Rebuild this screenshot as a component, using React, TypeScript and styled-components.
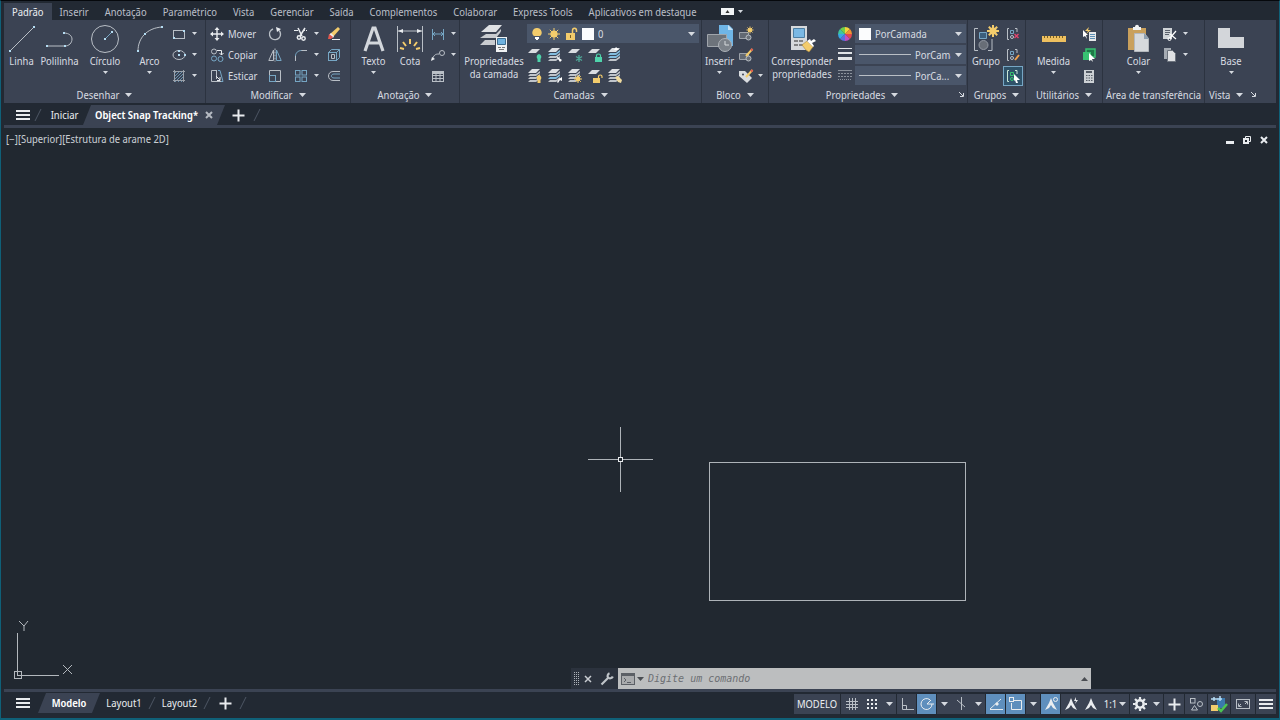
import React from "react";
import styled, { createGlobalStyle } from "styled-components";

const c = {
  frame: "#0f6078",
  dark: "#222933",
  ribbon: "#3b4353",
  line: "#2c3340",
  canvas: "#212830",
  field: "#4a566a",
  active: "#5f8fbd",
  text: "#d6dae0",
  bright: "#e9ecef",
  icon: "#b9bfc6",
  blue: "#76a6c4",
  yellow: "#f3cc6c",
  green: "#38c172",
};

const GlobalStyle = createGlobalStyle`
  * { box-sizing: border-box; }
  body { margin: 0; background: ${c.dark}; }
  body, button, select, input {
    font-family: "Noto Sans Display", "Noto Sans", "Open Sans", sans-serif;
    font-size: 10px;
    line-height: 14px;
    color: ${c.text};
  }
  button { border: 0; padding: 0; margin: 0; background: none; cursor: pointer; }
  svg { display: block; flex: none; }
`;

/* ---------- frame ---------- */

const Window = styled.div`
  display: flex;
  flex-direction: column;
  height: 100vh;
  padding: 2px 3px 0;
  border: solid ${c.frame};
  border-width: 0 1px 2px;
  border-top: 1px solid #05080c;
  background: ${c.dark};
  overflow: hidden;
`;

const MenuBar = styled.nav`
  display: flex;
  flex: none;
  height: 17px;
`;

const MenuTab = styled.button<{ $active?: boolean }>`
  height: 17px;
  padding: 0 8px;
  white-space: nowrap;
  color: ${(p) => (p.$active ? c.bright : "#b9bec7")};
  background: ${(p) => (p.$active ? c.ribbon : "transparent")};
`;

const MenuExtra = styled.button`
  display: flex;
  align-items: center;
  gap: 4px;
  margin-left: 16px;
`;

/* ---------- ribbon ---------- */

const Ribbon = styled.div`
  display: flex;
  flex: none;
  background: ${c.ribbon};
  white-space: nowrap;
`;

const PanelBox = styled.section<{ $w?: number }>`
  display: flex;
  flex-direction: column;
  ${(p) => (p.$w ? `flex: none; width: ${p.$w}px;` : "flex: 1;")}
  border-right: 1px solid ${(p) => (p.$w ? c.line : "transparent")};
`;

const PanelBody = styled.div<{ $pad?: number }>`
  display: flex;
  height: 66px;
  padding: 3px 0 0 ${(p) => p.$pad ?? 0}px;
`;

const PanelTitle = styled.button<{ $left?: boolean }>`
  display: flex;
  align-items: center;
  justify-content: ${(p) => (p.$left ? "flex-start" : "center")};
  gap: 6px;
  height: 17px;
  padding: 0 4px;
`;

const TitleRow = styled.div<{ $left?: boolean }>`
  display: grid;
  grid-template-columns: ${(p) => (p.$left ? "auto 12px 1fr" : "1fr 12px")};
  align-items: center;
  height: 17px;
`;

const BigButton = styled.button<{ $w: number }>`
  display: flex;
  flex: none;
  flex-direction: column;
  align-items: center;
  width: ${(p) => p.$w}px;
  height: 62px;
`;

const BigIcon = styled.span`
  display: flex;
  align-items: center;
  justify-content: center;
  height: 32px;
`;

const BigLabel = styled.span`
  line-height: 13px;
  white-space: pre;
`;

const CaretBox = styled.span`
  display: flex;
  justify-content: center;
  padding-top: 3px;
`;

const Column = styled.div<{ $w?: number }>`
  display: flex;
  flex: none;
  flex-direction: column;
  ${(p) => (p.$w ? `width: ${p.$w}px;` : "")}
`;

const Row = styled.div<{ $gap?: number }>`
  display: flex;
  align-items: center;
  gap: ${(p) => p.$gap ?? 0}px;
  height: 21px;
`;

const Tool = styled.button<{ $w?: number; $h?: number; $on?: boolean }>`
  display: flex;
  flex: none;
  align-items: center;
  justify-content: center;
  width: ${(p) => p.$w ?? 20}px;
  height: ${(p) => p.$h ?? 20}px;
  ${(p) => (p.$on ? `border: 1px solid ${c.blue}; background: #2f5269;` : "")}
`;

const TextTool = styled.button`
  display: flex;
  align-items: center;
  gap: 3px;
  height: 20px;
`;

const Field = styled.label`
  display: flex;
  flex: 1;
  align-items: center;
  gap: 4px;
  min-width: 0;
  height: 19px;
  padding: 0 4px;
  background: ${c.field};
`;

const Select = styled.select`
  flex: 1;
  min-width: 0;
  height: 16px;
  padding: 0;
  border: 0;
  appearance: none;
  background: transparent;
  outline: none;
`;

const Swatch = styled.span`
  flex: none;
  width: 12px;
  height: 12px;
  background: #fbfcfd;
`;

const LayerArea = styled.div`
  width: 172px;
`;

const FieldStack = styled.div`
  width: 111px;
`;

/* ---------- tab strips ---------- */

const Strip = styled.div`
  display: flex;
  flex: none;
  align-items: center;
  height: 22px;
  padding-left: 12px;
`;

const FileStrip = styled(Strip)`
  align-items: stretch;
  padding-top: 2px;
  & > svg { align-self: center; }
`;

const LayoutStrip = styled(Strip)`
  align-self: flex-start;
`;

const Bar = styled.div`
  flex: none;
  height: 3px;
  background: ${c.ribbon};
`;

const StripButton = styled.button<{ $w: number }>`
  display: flex;
  flex: none;
  align-items: center;
  justify-content: center;
  width: ${(p) => p.$w}px;
  color: ${c.bright};
`;

const Slanted = styled.div<{ $w: number }>`
  display: flex;
  flex: none;
  align-items: center;
  justify-content: center;
  gap: 7px;
  width: ${(p) => p.$w}px;
  height: 20px;
  background: ${c.ribbon};
  clip-path: polygon(8px 0, 100% 0, calc(100% - 8px) 100%, 0 100%);
`;

const SlantedTab = styled.button`
  color: #fff;
  font-weight: 600;
`;

/* ---------- canvas ---------- */

const Canvas = styled.main`
  position: relative;
  flex: 1;
  min-height: 0;
  background: ${c.canvas};
  margin: 0 -3px;
`;

const Drawing = styled.svg`
  position: absolute;
  inset: 0;
  width: 100%;
  height: 100%;
`;

const CanvasHeader = styled.div`
  position: relative;
  display: flex;
  align-items: flex-start;
  justify-content: space-between;
  padding: 4px 9px 0 5px;
`;

const ViewLabel = styled.button`
  color: #c9ced4;
`;

const WindowButtons = styled.div`
  display: flex;
  align-items: center;
  gap: 5px;
`;

const Ucs = styled.svg`
  position: absolute;
  left: 13px;
  bottom: 9px;
`;

const CommandBar = styled.div`
  position: absolute;
  left: 570px;
  right: 188px;
  bottom: 0;
  display: flex;
  align-items: center;
  height: 21px;
  background: #2b323d;
`;

const CommandField = styled.label`
  display: flex;
  flex: 1;
  align-items: center;
  gap: 2px;
  height: 21px;
  padding: 0 3px;
  background: #bcbebf;
`;

const CommandInput = styled.input`
  flex: 1;
  min-width: 0;
  padding: 0 0 0 2px;
  border: 0;
  outline: none;
  background: transparent;
  color: #333;
  font-family: "DejaVu Sans Mono", "Liberation Mono", monospace;
  font-style: italic;
  &::placeholder { color: #6c6f73; opacity: 1; }
`;

/* ---------- status bar ---------- */

const StatusBar = styled.footer`
  display: flex;
  flex: none;
  align-items: center;
  justify-content: space-between;
  height: 26px;
  padding-bottom: 2px;
`;

const StatusTools = styled.div`
  display: flex;
`;

const StatusButton = styled.button<{ $w: number; $on?: boolean; $sep?: boolean }>`
  display: flex;
  flex: none;
  align-items: center;
  justify-content: center;
  gap: 2px;
  width: ${(p) => p.$w}px;
  height: 20px;
  color: ${c.bright};
  background: ${(p) => (p.$on ? c.active : c.ribbon)};
  border-right: ${(p) => (p.$sep || p.$on ? `1px solid ${c.dark}` : "0")};
`;

/* ---------- icons ---------- */

type P = { children: React.ReactNode; w?: number; h?: number; s?: string; sw?: number };
const Ico = ({ children, w = 16, h = 16, s = c.icon, sw = 1 }: P) => (
  <svg width={w} height={h} viewBox={`0 0 ${w} ${h}`} fill="none" stroke={s} strokeWidth={sw} aria-hidden="true">
    {children}
  </svg>
);

const Caret = ({ big, fill = c.text }: { big?: boolean; fill?: string }) => (
  <svg width={big ? 7 : 5} height={big ? 4 : 3} viewBox="0 0 8 4" preserveAspectRatio="none" fill={fill} aria-hidden="true">
    <path d="M0 0h8L4 4z" />
  </svg>
);

const SmallCaret = () => (
  <Tool $w={10} aria-label="Mais opções"><Caret /></Tool>
);

const Menu = () => (
  <Ico w={14} h={12} s={c.bright} sw={2}><path d="M0 2h14M0 6h14M0 10h14" /></Ico>
);
const Plus = () => (
  <Ico w={13} h={13} s={c.bright} sw={2}><path d="M6.500 .5v12M.5 6.500h12" /></Ico>
);
const Slash = ({ w = 14 }: { w?: number }) => (
  <Ico w={w} h={14} s="#4d5664"><path d={`M${w / 2 - 3} 13l6-12`} /></Ico>
);
const Dot = ({ x, y }: { x: number; y: number }) => (
  <rect x={x - 1} y={y - 1} width="2" height="2" fill="#b4dcf2" stroke="none" />
);

const IcLine = () => (
  <Ico w={28} h={30}><path d="M2 27L26 3" /><Dot x={2} y={27} /><Dot x={26} y={3} /></Ico>
);
const IcPoly = () => (
  <Ico w={28} h={30}><path d="M1 22h18c4 0 7-3 7-7 0-3-3-6-8-6" /><Dot x={1} y={22} /><Dot x={19} y={22} /><Dot x={18} y={9} /></Ico>
);
const IcCircle = () => (
  <Ico w={30} h={30}><circle cx="15" cy="15" r="13.500" /><path stroke={c.blue} d="M15 15l7-7" /><Dot x={15} y={15} /><Dot x={22} y={8} /></Ico>
);
const IcArc = () => (
  <Ico w={28} h={30}><path d="M2 27C2 14 11 4 26 3" /><Dot x={2} y={27} /><Dot x={9} y={10} /><Dot x={26} y={3} /></Ico>
);
const IcRect = () => (
  <Ico><rect x="2.500" y="4.500" width="11" height="8" /><Dot x={3} y={12} /><Dot x={13} y={5} /></Ico>
);
const IcEllipse = () => (
  <Ico><ellipse cx="8" cy="8" rx="6" ry="4.500" /><Dot x={8} y={8} /><Dot x={8} y={4} /><Dot x={14} y={8} /></Ico>
);
const IcHatch = () => (
  <Ico s={c.blue}><path strokeWidth=".8" d="M3 6l3-3M3 9l6-6M3 12l9-9M4 14l9-9M7 14l6-6M10 14l3-3" /><path stroke="#9aa1aa" d="M3.500 2v12M12.500 2v12M2 3.500h12M2 12.500h12" /></Ico>
);
const IcMove = () => (
  <Ico s={c.bright} sw={1.4}><path d="M8 2v12M2 8h12" /><path fill={c.bright} stroke="none" d="M8 1l2.500 3h-5zM8 15l2.500-3h-5zM1 8l3-2.500v5zM15 8l-3-2.500v5z" /></Ico>
);
const IcCopy = () => (
  <Ico><circle cx="5" cy="4.500" r="2.500" /><path d="M8 3.500h4.500V8M10.500 6l2 2 2-2" stroke={c.bright} /><circle cx="5" cy="11.500" r="2.500" stroke={c.blue} /><circle cx="11.500" cy="12" r="2.500" stroke={c.blue} /></Ico>
);
const IcStretch = () => (
  <Ico><path d="M7 2.500H2.500v11H12M7.500 2v9" /><path d="M9 2.500h2l3 11h-2" stroke={c.blue} /><path d="M7 8l4 4M11 9v3.500H8" stroke={c.bright} /></Ico>
);
const IcRotate = () => (
  <Ico sw={1.4}><path d="M6 3A5.500 5.500 0 1 0 13.500 8c0-1.500-.5-2.500-1.500-3.500" /><path fill={c.bright} stroke="none" d="M9 1l5 2-4 3z" /></Ico>
);
const IcMirror = () => (
  <Ico><path d="M6.500 3v10.500H1.800z" /><path stroke={c.blue} d="M9.500 3v10.500h4.700z" /><path d="M8 1.500v13" strokeDasharray="2 1" /></Ico>
);
const IcScale = () => (
  <Ico><path d="M2.500 7V2.500h11v11H9" /><rect x="2.500" y="7.500" width="6" height="6" stroke={c.blue} /></Ico>
);
const IcTrim = () => (
  <Ico s={c.bright} sw={1.5}><path d="M5 2l4 8M12 2L7 10" /><circle cx="10.500" cy="12.500" r="1.700" /><circle cx="6" cy="11.500" r="1.700" /><path strokeWidth="1" d="M1 4.500h4" /><path strokeWidth="1" strokeDasharray="1 1" d="M11 4.500h4" /></Ico>
);
const IcFillet = () => (
  <Ico><path d="M2.500 14V9M8 3.500h6" /><path stroke={c.blue} d="M2.500 9c0-3 2.500-5.500 6-5.500" /></Ico>
);
const IcArray = () => (
  <Ico s={c.blue}><rect x="2.500" y="2.500" width="4.500" height="4.500" /><rect x="9" y="2.500" width="4.500" height="4.500" /><rect x="2.500" y="9" width="4.500" height="4.500" /><rect x="9" y="9" width="4.500" height="4.500" /></Ico>
);
const IcErase = () => (
  <Ico sw={0}><path fill={c.yellow} d="M12 1l2 2-7 8-3-3z" /><path fill="#eee" d="M5 7l3 3-1 2-4-3z" /><path fill="#e2574c" d="M3 8l4 3-2 2H2z" /><path fill={c.bright} d="M6 13h8v1H6z" /></Ico>
);
const IcBox = () => (
  <Ico s={c.blue}><rect x="2.500" y="5.500" width="8" height="8" /><path d="M2.500 5.500l3-3h8v8l-3 3M10.500 5.500l3-3" /><path stroke={c.icon} d="M5.500 7.500h3v4h-3z" /></Ico>
);
const IcOffset = () => (
  <Ico><path d="M14 3.500H7c-6 0-6 9 0 9h7" /><path stroke={c.blue} d="M14 6H8c-3.500 0-3.500 4 0 4h6" /></Ico>
);
const IcText = () => (
  <svg width="24" height="28" viewBox="0 0 24 28" fill="none" stroke="#d3d7dc" strokeWidth="3.200" aria-hidden="true">
    <path d="M3 26L11 3h2l8 23M6 18h12" />
  </svg>
);
const IcDim = () => (
  <Ico w={28} h={30}>
    <path d="M1.500 2v26M26.500 2v26M2 7h24" />
    <path fill={c.bright} stroke="none" d="M2 7l5-2v4zM26 7l-5-2v4z" />
    <path stroke={c.yellow} strokeWidth="2" d="M14 20v-5M10 22l-3-4M18 22l3-4M8 25l-4-1M20 25l4-1" />
  </Ico>
);
const IcLinear = () => (
  <Ico s={c.blue}><path d="M2.500 3v11M13.500 3v11M3 8h10" /><path d="M5 6L3 8l2 2M11 6l2 2-2 2" /></Ico>
);
const IcLeader = () => (
  <Ico><path d="M2 13c2-5 3-6 7-6" /><circle cx="12" cy="6" r="2.500" /><path fill={c.bright} stroke="none" d="M1 14l1-4 3 2z" /></Ico>
);
const IcTable = () => (
  <Ico><rect x="2.500" y="3.500" width="11" height="10" /><path d="M3 5h10" strokeWidth="2" /><path d="M3 7.500h10M3 10.500h10M6 6v8M10 6v8" /></Ico>
);
const IcLayers = () => (
  <Ico w={30} h={30} sw={0}>
    <path fill="#dfe1e4" d="M10 1h13l-6 7H2z" />
    <path fill="#c9ccd0" d="M7 10h10l5-5v2l-1 2-4 5H1zM6 16h10v5H1z" />
    <rect x="17" y="13" width="11" height="15" fill="#f0f2f3" />
    <path fill="#6fb2df" stroke="#3d6f92" strokeWidth="1" d="M18.500 14.500h8v6h-8z" /><path fill="#777" d="M19 23h3v1h-3zM23 23h3v1h-3zM20 25h5v1h-5z" />
  </Ico>
);
const IcBulb = () => (
  <Ico w={12} h={14} sw={0}><path fill={c.yellow} d="M6 1a4.500 4.500 0 0 1 3 8H3a4.500 4.500 0 0 1 3-8z" /><path fill="#fff" d="M4 10h4v2H4zM5 12h2v1H5z" /></Ico>
);
const Rays = ({ x, y, r }: { x: number; y: number; r: number }) => (
  <g stroke={c.yellow} transform={`translate(${x} ${y})`}>
    <path d={[0, 45, 90, 135, 180, 225, 270, 315].map((a) => {
      const t = (a * Math.PI) / 180;
      return `M0 0L${(Math.cos(t) * r).toFixed(1)} ${(Math.sin(t) * r).toFixed(1)}`;
    }).join("")} />
    <circle r={r * 0.6} fill={c.yellow} stroke="none" />
  </g>
);
const IcSun = () => <Ico w={14} h={14}><Rays x={7} y={7} r={6} /></Ico>;
const IcLock = () => (
  <Ico w={13} h={14}><path stroke={c.yellow} strokeWidth="1.500" d="M7.500 6V3.500c0-3 4-3 4 0V5" /><path fill={c.yellow} stroke="none" d="M1 6h9v7H1z" /><path stroke="#7a6020" d="M5.500 8v3" /></Ico>
);

type Mini = "bulb" | "arrow" | "snow" | "lock" | "blue" | "bulbY" | "walk" | "sun" | "unlock" | "merge";
const layerKinds: Mini[][] = [
  ["bulb", "arrow", "snow", "lock", "blue"],
  ["bulbY", "walk", "sun", "unlock", "merge"],
];
const single: Mini[] = ["bulb", "snow", "lock", "unlock"];
const IcLayer = ({ k }: { k: Mini }) => (
  <Ico sw={0}>
    {single.includes(k) ? (
      <path fill="#d9dce0" d="M5 2h8L9 6H1z" />
    ) : (
      <>
        <path fill="#dcdfe3" d="M5 1h8L9 5H1z" />
        <path fill={k === "arrow" || k === "blue" ? "#83bddf" : "#bfc4ca"} d="M1 8l2-2h6l4-3v2L9 8z" />
        <path fill={k === "blue" || k === "walk" ? "#83bddf" : "#bfc4ca"} d="M1 11l2-2h6l4-3v2l-4 3z" />
        <path fill="#bfc4ca" d="M1 14l2-2h6l4-3v2l-4 3z" />
      </>
    )}
    {k === "bulb" && <path fill="#4fd3ab" d="M12 7a3 3 0 0 1 1.500 5v3h-3v-3A3 3 0 0 1 12 7z" />}
    {k === "bulbY" && <path fill={c.yellow} d="M12 7a3 3 0 0 1 1.500 5v3h-3v-3A3 3 0 0 1 12 7z" />}
    {k === "arrow" && <path fill="#fff" d="M9 9l6 4-2 2z" />}
    {k === "walk" && <path fill="#fff" d="M15 9v4l-2-1-2 3-1-1 2-3z" />}
    {k === "snow" && <path stroke="#4fa596" strokeWidth="1.400" d="M12 8v7M9 9.500l6 4M9 13.500l6-4" />}
    {k === "sun" && <g strokeWidth="1"><Rays x={11} y={11} r={4} /></g>}
    {k === "lock" && <><path fill="#4fd3ab" d="M8 10h7v5H8z" /><path stroke="#4fd3ab" strokeWidth="1.200" fill="none" d="M9.500 10V8.500c0-2 4-2 4 0V10" /></>}
    {k === "unlock" && <><path fill={c.yellow} d="M6 10h7v5H6z" /><path stroke={c.yellow} strokeWidth="1.200" fill="none" d="M11.500 10V8.500c0-2 3.500-2 3.500 0V10" /></>}
    {k === "blue" && <path fill="#fff" d="M9 0l3 3H7z" />}
    {k === "merge" && <path fill="#f0dba0" d="M8 9l3-1 4 4-1 3-3-1z" />}
  </Ico>
);

const IcInsert = () => (
  <Ico w={30} h={30} sw={0}>
    <path fill="#6fb5e6" d="M14 1h10l4 4v17H14z" /><path fill="#c7e2f5" d="M23 1l5 5h-5z" />
    <path fill="#6d737b" stroke="#a0a5ab" strokeWidth="1" d="M2.500 10.500h19v12h-19z" />
    <circle cx="20" cy="21" r="6.500" fill="#7b8189" stroke="#adb2b8" strokeWidth="1" /><path stroke="#d6d9dc" strokeWidth="1" fill="none" d="M20 17v4h4" />
  </Ico>
);
const IcBlock = ({ k }: { k: "new" | "edit" | "attr" }) => (
  <Ico>
    {k === "attr" ? (
      <path fill="#d9dce0" stroke="none" d="M1 3h6l7 7-5 5-8-7z" />
    ) : (
      <><path fill="#626973" stroke="#9da3aa" d="M1.500 6.500h9v6h-9z" /><circle cx="10.500" cy="11.500" r="2.500" fill="#6a7078" /></>
    )}
    {k === "attr" && <circle cx="5" cy="6.500" r="1" fill={c.ribbon} stroke="none" />}
    {k === "new" ? <Rays x={12} y={4} r={3.5} /> : <path stroke={c.yellow} strokeWidth="2" d="M14.500 2L8 9" />}
    {k !== "new" && <path stroke="#e2574c" strokeWidth="2" d="M14.500 2l-1.500 1.500" />}
  </Ico>
);
const IcMatch = () => (
  <Ico w={28} h={30} sw={0}>
    <path fill="#d6d9dc" d="M3 2h16v24H3z" /><path fill="#7ab8e4" stroke="#4c7ea3" strokeWidth="1" d="M5.500 4.500h11v9h-11z" />
    <path stroke="#666" strokeWidth="1.500" strokeDasharray="4 1" d="M6 17h9M6 21h9" />
    <path fill={c.yellow} stroke="#a8873b" strokeWidth=".6" d="M14 21l5-4 6 6-4 5-3-2z" /><path fill="#fff" d="M19 17l6 6 1-1-2-3 4-2-2-2-3 2-1-2z" />
  </Ico>
);
const wedge = ["#f5d33b", "#f29332", "#e5484d", "#c44fc0", "#5b6fe0", "#37a7e6", "#3ec5a0", "#6fcf4a"];
const IcColor = () => (
  <Ico sw={0}>
    {wedge.map((f, i) => {
      const a = (i * Math.PI) / 4, b = ((i + 1) * Math.PI) / 4;
      const q = (t: number) => `${(8 + 7 * Math.sin(t)).toFixed(2)} ${(8 - 7 * Math.cos(t)).toFixed(2)}`;
      return <path key={f} fill={f} d={`M8 8L${q(a)}A7 7 0 0 1 ${q(b)}z`} />;
    })}
  </Ico>
);
const IcWeight = () => (
  <Ico s="#e1e4e7"><path d="M1 1.500h14" /><path strokeWidth="2" d="M1 6h14" /><path strokeWidth="3" d="M1 11.500h14" /></Ico>
);
const IcType = () => (
  <Ico s="#8b929c"><path d="M1 2.500h14" /><path strokeDasharray="2 1" d="M1 5.500h14M1 8.500h14" /><path strokeDasharray="1 1" d="M1 11.500h14" /></Ico>
);
const IcGroup = () => (
  <Ico w={28} h={30}>
    <path d="M6 4.500H2.500v22H6M16 26.500h4V15" />
    <path fill="#3c5f7d" stroke={c.blue} d="M7.500 8.500h7v6h-7z" /><circle cx="11.500" cy="21" r="4.500" fill="#686e77" stroke="#9096a0" />
    <g strokeWidth="2"><Rays x={21} y={7} r={6} /></g>
  </Ico>
);
const IcGroupSmall = ({ k }: { k: "x" | "edit" | "sel" }) => (
  <Ico s={k === "sel" ? "#c9e6d6" : c.icon}>
    <path d="M4 2.500H2.500v11H4M10 2.500h2V6" />
    <path stroke={k === "sel" ? c.green : c.blue} d="M5.500 4.500h3v3h-3z" /><circle cx="7" cy="11" r="1.500" stroke={k === "sel" ? c.green : c.icon} />
    {k === "x" && <path stroke="#e2446c" strokeWidth="1.400" d="M9.500 8l4 4M13.500 8l-4 4" />}
    {k === "edit" && <path stroke="#f0a04b" strokeWidth="2" d="M14 8l-4 5" />}
    {k === "sel" && <path fill="#fff" stroke="none" d="M9 6l6 6h-3l1 3h-2l-1-3-1 1z" />}
  </Ico>
);
const IcRuler = () => (
  <Ico w={26} h={30} sw={0}><path fill="#eec05f" d="M1 12h24v6H1z" /><path stroke="#7a6020" strokeWidth="1" d="M3.500 12v2M6.500 12v2M9.500 12v2M12.500 12v2M15.500 12v2M18.500 12v2M21.500 12v2" /></Ico>
);
const IcQuick = () => (
  <Ico sw={0}><path fill="#e6e8ea" d="M8 6h7v9H8z" /><path stroke="#5c8fb5" strokeWidth="1" d="M9 8.500h5M9 10.500h5M9 12.500h5" /><path fill="#fff" d="M2 4l5 5H5l1 4-2-3-2 1z" /><path fill={c.yellow} d="M8 1L4 5h3L5 8l5-4H7z" /></Ico>
);
const IcSelAll = () => (
  <Ico sw={0}><path fill="#1f7a48" stroke={c.green} strokeWidth="1.500" d="M5 2h9v8H5z" /><path fill={c.green} d="M2 5h8v8H2z" /><path fill="#fff" d="M8 6l6 6h-3l1 3-2-2-2 1z" /></Ico>
);
const IcCalc = () => (
  <Ico sw={0}><path fill="#cdd1d5" d="M3 2h10v13H3z" /><path fill="#555c66" d="M5 3h6v2H5z" /><path stroke="#555c66" strokeWidth="1.200" strokeDasharray="1.500 1" d="M5 7.500h7M5 10h7M5 12.500h7" /></Ico>
);
const IcPaste = () => (
  <Ico w={26} h={30} sw={0}><path fill="#c9a05c" d="M2 4h18v22H2z" /><path fill="#f2f3f4" d="M7 3h2c0-3 4-3 4 0h2v3H7z" /><path fill="#d6d9dc" stroke="#b4b8bd" strokeWidth="1" d="M8.500 9.500h10l4 5v13h-14z" /><path fill="#8ea0b2" d="M18 9l5 6h-5z" /></Ico>
);
const IcCut = () => (
  <Ico sw={0}><path fill="#cfd3d7" d="M1 2h9v11H1z" /><path stroke="#59606b" strokeWidth="1" d="M3 4.500h5M3 6.500h5M3 8.500h4" /><path stroke="#fff" strokeWidth="1.200" d="M14 5l-6 7M8 8l6 5" /><circle cx="7.500" cy="13" r="1.500" fill="none" stroke="#fff" strokeWidth="1" /></Ico>
);
const IcCopyClip = () => (
  <Ico sw={0}><path fill="#a5abb3" d="M2 1h7v11H2z" /><path fill="#dfe1e4" stroke="#6d747e" strokeWidth="1" d="M5.500 3.500h5l3 3v8h-8z" /></Ico>
);
const IcBase = () => (
  <Ico w={28} h={30} sw={0}><path fill="#d3d6da" d="M1 4h12v9h14v11H1z" /></Ico>
);
const Launcher = () => (
  <Ico w={7} h={7} s={c.text}><path d="M1 1l4 4M5.500 2v3.500H2" /></Ico>
);

/* ---------- composed pieces ---------- */

const Big = ({ w, label, icon, caret }: { w: number; label: string; icon: React.ReactNode; caret?: boolean }) => (
  <BigButton $w={w}>
    <BigIcon>{icon}</BigIcon>
    <BigLabel>{label}</BigLabel>
    {caret && <CaretBox><Caret /></CaretBox>}
  </BigButton>
);

const IconColumn = ({ items, w, carets = [], names }: { items: React.ReactNode[]; w?: number; carets?: number[]; names: string[] }) => (
  <Column $w={w}>
    {items.map((it, i) => (
      <Row key={names[i]}>
        <Tool aria-label={names[i]}>{it}</Tool>
        {carets.includes(i) && <SmallCaret />}
      </Row>
    ))}
  </Column>
);

type PanelProps = { title: string; w?: number; pad?: number; plain?: boolean; launcher?: boolean; left?: boolean; children: React.ReactNode };
const Panel = ({ title, w, pad, plain, launcher, left, children }: PanelProps) => (
  <PanelBox $w={w}>
    <PanelBody $pad={pad}>{children}</PanelBody>
    {launcher ? (
      <TitleRow $left={left}>
        <PanelTitle $left={left}>{title}<Caret big /></PanelTitle>
        <Tool $w={12} $h={16} aria-label={`Configurações de ${title}`}><Launcher /></Tool>
      </TitleRow>
    ) : (
      <PanelTitle>{title}{!plain && <Caret big />}</PanelTitle>
    )}
  </PanelBox>
);

const menus = ["Padrão", "Inserir", "Anotação", "Paramétrico", "Vista", "Gerenciar", "Saída", "Complementos", "Colaborar", "Express Tools", "Aplicativos em destaque"];

const IcPerson = ({ k }: { k?: "snap" | "bolt" }) => (
  <Ico s={c.bright}>
    <path fill={c.bright} stroke="none" d="M8 2l2 5 4 7-4-2-2-3-2 3-4 2 4-7z" />
    {k === "snap" && <circle cx="12.500" cy="3.500" r="2" />}
    {k === "bolt" && <path fill={c.bright} stroke="none" d="M13 1l-2 4h2l-1 3 3-4h-2z" />}
  </Ico>
);

export default function App() {
  return (
    <Window>
      <GlobalStyle />
      <MenuBar>
        {menus.map((m, i) => <MenuTab key={m} $active={i === 0}>{m}</MenuTab>)}
        <MenuExtra aria-label="Minimizar faixa">
          <Ico w={13} h={7} sw={0}><path fill="#f2f4f6" d="M0 0h13v7H0z" /><path fill="#333" d="M4.500 5h4L6.500 2z" /></Ico>
          <Caret />
        </MenuExtra>
      </MenuBar>

      <Ribbon>
        <Panel title="Desenhar" w={202}>
          <Big w={35} label="Linha" icon={<IcLine />} />
          <Big w={41} label="Polilinha" icon={<IcPoly />} />
          <Big w={50} label="Círculo" icon={<IcCircle />} caret />
          <Big w={39} label="Arco" icon={<IcArc />} caret />
          <IconColumn names={["Retângulo", "Elipse", "Hachura"]} items={[<IcRect />, <IcEllipse />, <IcHatch />]} carets={[0, 1, 2]} />
        </Panel>

        <Panel title="Modificar" w={145} pad={3}>
          <Column $w={56}>
            <Row><TextTool><IcMove />Mover</TextTool></Row>
            <Row><TextTool><IcCopy />Copiar</TextTool></Row>
            <Row><TextTool><IcStretch />Esticar</TextTool></Row>
          </Column>
          <IconColumn w={26} names={["Rotacionar", "Espelhar", "Escala"]} items={[<IcRotate />, <IcMirror />, <IcScale />]} />
          <IconColumn w={33} names={["Aparar", "Concordância", "Matriz"]} items={[<IcTrim />, <IcFillet />, <IcArray />]} carets={[0, 1, 2]} />
          <IconColumn names={["Apagar", "Explodir", "Deslocamento"]} items={[<IcErase />, <IcBox />, <IcOffset />]} />
        </Panel>

        <Panel title="Anotação" w={109} pad={4}>
          <Big w={37} label="Texto" icon={<IcText />} caret />
          <Big w={36} label="Cota" icon={<IcDim />} />
          <IconColumn names={["Linear", "Chamada", "Tabela"]} items={[<IcLinear />, <IcLeader />, <IcTable />]} carets={[0, 1]} />
        </Panel>

        <Panel title="Camadas" w={242} pad={1}>
          <Big w={66} label={"Propriedades\nda camada"} icon={<IcLayers />} />
          <LayerArea>
            <Row>
              <Field>
                <IcBulb /><IcSun /><IcLock /><Swatch />
                <Select aria-label="Camada"><option>0</option></Select>
                <Caret big />
              </Field>
            </Row>
            {layerKinds.map((r, i) => (
              <Row key={i} $gap={4}>{r.map((k) => <Tool key={k} $w={16} aria-label={`Camada ${k}`}><IcLayer k={k} /></Tool>)}</Row>
            ))}
          </LayerArea>
        </Panel>

        <Panel title="Bloco" w={67}>
          <Big w={35} label="Inserir" icon={<IcInsert />} caret />
          <Column>
            <Row><Tool $w={18} aria-label="Criar"><IcBlock k="new" /></Tool></Row>
            <Row><Tool $w={18} aria-label="Editar"><IcBlock k="edit" /></Tool></Row>
            <Row><Tool $w={18} aria-label="Editar atributos"><IcBlock k="attr" /></Tool><SmallCaret /></Row>
          </Column>
        </Panel>

        <Panel title="Propriedades" w={199} launcher>
          <Big w={66} label={"Corresponder\npropriedades"} icon={<IcMatch />} />
          <IconColumn names={["Cor", "Espessura", "Tipo de linha"]} items={[<IcColor />, <IcWeight />, <IcType />]} />
          <FieldStack>
            <Row>
              <Field>
                <Swatch /><Select aria-label="Cor do objeto"><option>PorCamada</option></Select><Caret big />
              </Field>
            </Row>
            <Row>
              <Field>
                <Ico w={52} h={3}><path d="M0 1.500h52" /></Ico>
                <Select aria-label="Espessura da linha"><option>PorCamada</option></Select><Caret big />
              </Field>
            </Row>
            <Row>
              <Field>
                <Ico w={52} h={3}><path d="M0 1.500h52" /></Ico>
                <Select aria-label="Tipo de linha"><option>PorCa...</option></Select><Caret big />
              </Field>
            </Row>
          </FieldStack>
        </Panel>

        <Panel title="Grupos" w={58} pad={1}>
          <Big w={34} label="Grupo" icon={<IcGroup />} />
          <Column>
            <Row><Tool aria-label="Desagrupar"><IcGroupSmall k="x" /></Tool></Row>
            <Row><Tool aria-label="Editar grupo"><IcGroupSmall k="edit" /></Tool></Row>
            <Row><Tool $on aria-label="Seleção de grupo"><IcGroupSmall k="sel" /></Tool></Row>
          </Column>
        </Panel>

        <Panel title="Utilitários" w={77} pad={2}>
          <Big w={51} label="Medida" icon={<IcRuler />} caret />
          <IconColumn names={["Seleção rápida", "Selecionar tudo", "Calculadora"]} items={[<IcQuick />, <IcSelAll />, <IcCalc />]} />
        </Panel>

        <Panel title="Área de transferência" w={102} pad={14} plain>
          <Big w={43} label="Colar" icon={<IcPaste />} caret />
          <IconColumn names={["Recortar", "Copiar recorte"]} items={[<IcCut />, <IcCopyClip />]} carets={[0, 1]} />
        </Panel>

        <Panel title="Vista" pad={6} launcher left>
          <Big w={40} label="Base" icon={<IcBase />} caret />
        </Panel>
      </Ribbon>

      <FileStrip>
        <StripButton $w={14} aria-label="Menu"><Menu /></StripButton>
        <StripButton $w={16} aria-hidden="true"><Slash /></StripButton>
        <StripButton $w={37}>Iniciar</StripButton>
        <Slanted $w={142}>
          <SlantedTab>Object Snap Tracking*</SlantedTab>
          <SlantedTab aria-label="Fechar aba">
            <Ico w={8} h={8} s="#b5bac2" sw={2}><path d="M1 1l6 6M7 1L1 7" /></Ico>
          </SlantedTab>
        </Slanted>
        <StripButton $w={26} aria-label="Nova aba"><Plus /></StripButton>
        <Slash w={12} />
      </FileStrip>
      <Bar />

      <Canvas>
        <Drawing aria-label="Desenho">
          <g fill="none" stroke="#aeb3b8" shapeRendering="crispEdges">
            <rect x="708.500" y="334.500" width="256" height="138" />
            <path d="M587 331.500h65M619.500 299v65" />
            <rect x="617.500" y="329.500" width="4" height="4" fill={c.canvas} stroke="#e8eaec" />
          </g>
        </Drawing>
        <CanvasHeader>
          <ViewLabel>[−][Superior][Estrutura de arame 2D]</ViewLabel>
          <WindowButtons>
            <Tool $w={12} $h={16} aria-label="Minimizar"><Ico w={10} h={10} s="#e9ecef" sw={3}><path d="M1 7.500h8" /></Ico></Tool>
            <Tool $w={12} $h={16} aria-label="Restaurar"><Ico w={10} h={10} s="#e9ecef"><path d="M3.500 3V1.500h5v5H7" /><path strokeWidth="2" d="M2 4h4v4H2z" /></Ico></Tool>
            <Tool $w={12} $h={16} aria-label="Fechar"><Ico w={10} h={10} s="#e9ecef" sw={2}><path d="M2 2l6 6M8 2L2 8" /></Ico></Tool>
          </WindowButtons>
        </CanvasHeader>

        <Ucs width="60" height="60" viewBox="0 0 60 60" fill="none" stroke="#b3b8bd" aria-label="Eixos X e Y">
          <path d="M3.500 13v43M4 55.500h41" shapeRendering="crispEdges" />
          <rect x=".5" y="51.500" width="7" height="7" />
          <path d="M5 1l5 5 4-5M10 6v5M49 45l9 9M58 45l-9 9" />
        </Ucs>

        <CommandBar>
          <Tool $w={10} aria-label="Mover barra de comando"><Ico w={5} h={14} s="#aeb3b9" sw={1}><path strokeDasharray="1 1" d="M.5 0v14M2.500 0v14M4.500 0v14" /></Ico></Tool>
          <Tool $w={14} aria-label="Fechar comando"><Ico w={8} h={8} s="#c9cdd2" sw={1.5}><path d="M1 1l6 6M7 1L1 7" /></Ico></Tool>
          <Tool $w={23} aria-label="Personalizar"><Ico w={14} h={14} s="#c0c5ca" sw={2.2}><path d="M1.500 12.500L8 6" /><path d="M12.800 4.500A3 3 0 0 1 8 5.500 3 3 0 0 1 9.500 1.200" /></Ico></Tool>
          <CommandField>
            <Ico w={14} h={12} s="#5c6066"><rect x=".5" y=".5" width="13" height="11" fill="#a9abad" /><path strokeWidth="2" d="M1 2h12" /><path d="M3 5l2 2-2 2M6 9.500h4" /></Ico>
            <Caret big fill="#4a4d52" />
            <CommandInput placeholder="Digite um comando" aria-label="Comando" />
            <Ico w={7} h={4} sw={0}><path fill="#4a4d52" d="M0 4h7L3.500 0z" /></Ico>
          </CommandField>
        </CommandBar>
      </Canvas>

      <Bar />
      <StatusBar>
        <LayoutStrip>
          <StripButton $w={14} aria-label="Menu de layouts"><Menu /></StripButton>
          <Column $w={8} />
          <Slanted $w={62}><SlantedTab>Modelo</SlantedTab></Slanted>
          <StripButton $w={48}>Layout1</StripButton>
          <Slash w={8} />
          <StripButton $w={47}>Layout2</StripButton>
          <Slash w={8} />
          <StripButton $w={28} aria-label="Novo layout"><Plus /></StripButton>
          <Slash w={8} />
        </LayoutStrip>
        <StatusTools>
          <StatusButton $w={47} $sep>MODELO</StatusButton>
          <StatusButton $w={21} aria-label="Grade"><Ico><path d="M5.500 2v12M8.500 2v12M11.500 2v12M2 5.500h12M2 8.500h12M2 11.500h12" /></Ico></StatusButton>
          <StatusButton $w={20} aria-label="Snap"><Ico s={c.bright} sw={2}><path strokeDasharray="2 2" d="M3 4h10M3 8h10M3 12h10" /></Ico></StatusButton>
          <StatusButton $w={15} $sep aria-label="Opções de snap"><Caret big /></StatusButton>
          <StatusButton $w={20} $sep aria-label="Orto"><Ico><path d="M3.500 2v11.500H15M3.500 9.500h4v4" /></Ico></StatusButton>
          <StatusButton $w={20} $on aria-label="Polar"><Ico s={c.bright}><path d="M13 8a5.500 5.500 0 1 1-2-4.200M8 8h7M8 8l4-4" /></Ico></StatusButton>
          <StatusButton $w={14} aria-label="Opções polares"><Caret big /></StatusButton>
          <StatusButton $w={20} aria-label="Isométrico"><Ico><path d="M8.500 1v6M8.500 7v7M4 4l8 7" /></Ico></StatusButton>
          <StatusButton $w={15} $sep aria-label="Opções isométricas"><Caret big /></StatusButton>
          <StatusButton $w={20} $on aria-label="Rastreamento"><Ico s={c.bright}><path d="M2 13.500h13M2 13L13 3" /><path fill={c.bright} d="M8 7h2v2H8z" /></Ico></StatusButton>
          <StatusButton $w={20} $on aria-label="Snap ao objeto"><Ico s={c.bright}><path d="M6 4.500h7.500v9h-10V7" /><rect x="1.500" y="1.500" width="4" height="4" /></Ico></StatusButton>
          <StatusButton $w={15} $sep aria-label="Opções de snap ao objeto"><Caret big /></StatusButton>
          <StatusButton $w={20} $on aria-label="Visibilidade"><IcPerson k="snap" /></StatusButton>
          <StatusButton $w={20} aria-label="Escala automática"><IcPerson k="bolt" /></StatusButton>
          <StatusButton $w={20} aria-label="Escala de anotação"><IcPerson /></StatusButton>
          <StatusButton $w={29} $sep>1:1<Caret big /></StatusButton>
          <StatusButton $w={20} aria-label="Configurações">
            <Ico s={c.bright} sw={2.5}><circle cx="8" cy="8" r="3.700" /><path strokeWidth="2.200" d="M8 1v2.500M8 12.500V15M1 8h2.500M12.500 8H15M3 3l2 2M11 11l2 2M13 3l-2 2M5 11l-2 2" /></Ico>
          </StatusButton>
          <StatusButton $w={14} $sep aria-label="Opções de área de trabalho"><Caret big /></StatusButton>
          <StatusButton $w={21} $sep aria-label="Monitor"><Plus /></StatusButton>
          <StatusButton $w={23} $sep aria-label="Isolar objetos"><Ico><rect x="2.500" y="2.500" width="4.500" height="4.500" /><circle cx="12" cy="8" r="2.500" /><path d="M6.500 9.500l3 4.500h-6z" /></Ico></StatusButton>
          <StatusButton $w={23} $sep aria-label="Desempenho">
            <Ico w={18} h={18} sw={0}><path fill="#3b78ad" d="M7 3h8v10H7z" /><path stroke="#b7dcf5" strokeWidth="1.500" d="M1 4h11M4 2v4M10 1v5" /><path fill={c.yellow} d="M1 10h7v6H1z" /><path stroke="#4cc552" strokeWidth="2.500" fill="none" d="M8 13l3 3 6-7" /></Ico>
          </StatusButton>
          <StatusButton $w={25} $sep aria-label="Tela limpa"><Ico><rect x="1.500" y="3.500" width="13" height="9" /><path d="M9.500 5.500h3v3M6.500 10.500h-3v-3" /><path d="M12 6l-2 2M4 10l2-2" /></Ico></StatusButton>
          <StatusButton $w={20} aria-label="Personalização"><Menu /></StatusButton>
        </StatusTools>
      </StatusBar>
    </Window>
  );
}
